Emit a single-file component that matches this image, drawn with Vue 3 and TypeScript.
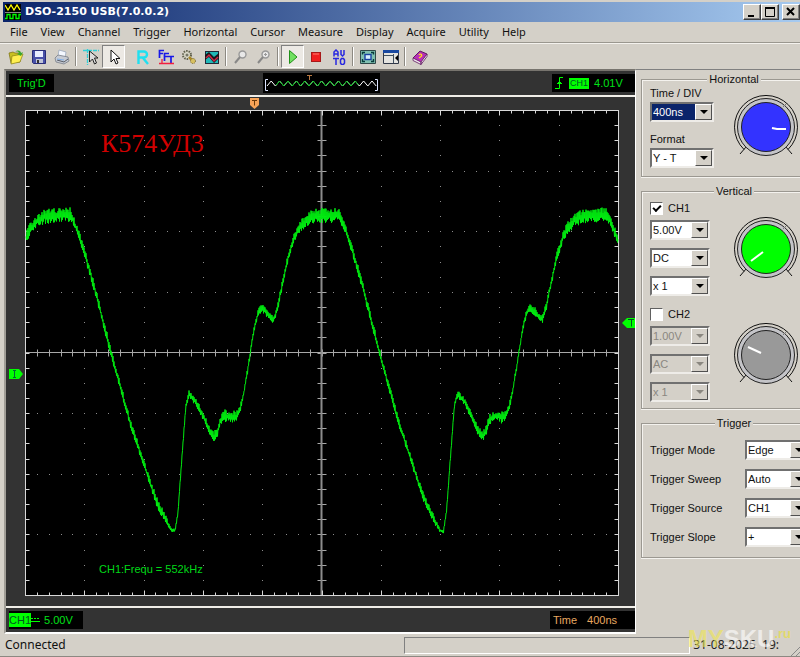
<script setup lang="ts">
import { reactive } from 'vue'

const menus = ['File', 'View', 'Channel', 'Trigger', 'Horizontal', 'Cursor', 'Measure', 'Display', 'Acquire', 'Utility', 'Help']

const settings = reactive({ time: '400ns', format: 'Y - T' })

const channels = reactive([
  { name: 'CH1', on: true, color: '#00ff00', hand: 'M-3 3L-15 12', fields: ['5.00V', 'DC', 'x 1'] },
  { name: 'CH2', on: false, color: '#999999', hand: 'M-18 -8L-5 -2', fields: ['1.00V', 'AC', 'x 1'] },
])
const fieldNames = ['Volts per division', 'Coupling', 'Probe']

const triggers = reactive([
  { label: 'Trigger Mode', value: 'Edge' },
  { label: 'Trigger Sweep', value: 'Auto' },
  { label: 'Trigger Source', value: 'CH1' },
  { label: 'Trigger Slope', value: '+' },
])

/* Graticule: 10 x 8 divisions */
const left = 25.5
const right = 618.5
const top = 110.5
const bottom = 595.5
const midX = 321.5
const midY = 352.5
const stepX = (right - left) / 50
const stepY = (bottom - top) / 32

let edgeTicks = ''
let axisTicks = ''
let dots = ''
for (let i = 1; i < 50; i++) {
  const x = Math.round(left + i * stepX - 0.5) + 0.5
  const len = i % 5 === 0 ? 5 : 3
  edgeTicks += `M${x} ${top}v${len}M${x} ${bottom}v${-len}`
  axisTicks += `M${x} ${midY - 3}v7`
  for (let r = 1; r < 8; r++) {
    if (r !== 4) dots += `M${x - 0.5} ${Math.round(top + r * stepY * 4 - 0.5) + 0.5}h1`
  }
}
for (let i = 1; i < 32; i++) {
  const y = Math.round(top + i * stepY - 0.5) + 0.5
  edgeTicks += `M${left} ${y}h4M${right} ${y}h-4`
  axisTicks += `M${midX - 4} ${y}h9`
  for (let c = 1; c < 10; c++) {
    if (c !== 5) dots += `M${Math.round(left + c * stepX * 5 - 0.5)} ${y}h1`
  }
}

/* One period of the signal; third value is the noise height */
const period = 268.5
const shape: number[][] = [
  [25, 240, 5], [30, 229, 6], [38, 220, 6], [46, 216, 7], [70, 215, 7], [73, 220, 5], [78, 233, 5],
  [85, 254, 5], [95, 290, 5], [105, 329, 5], [111, 353, 4], [121, 389, 4], [130, 422, 4], [140, 452, 4],
  [150, 483, 4], [158, 505, 5], [166, 520, 4], [171, 530, 2], [175, 531, 2], [178, 512, 2], [181, 470, 2],
  [184, 430, 2], [186, 405, 2], [189, 394, 4], [196, 402, 4], [204, 418, 4], [209, 430, 4], [214, 436, 5],
  [217, 433, 5], [221, 420, 5], [225, 416, 6], [236, 417, 6], [240, 410, 4], [244, 392, 3], [249, 362, 3],
  [252, 342, 3], [255, 325, 3], [258, 313, 4], [262, 308, 5], [266, 311, 5], [270, 317, 4], [274, 319, 4],
  [278, 306, 4], [283, 281, 4], [288, 258, 5], [293.5, 240, 5],
]

function sample(x: number): number[] {
  const px = ((x - 25) % period) + 25
  for (let i = 1; i < shape.length; i++) {
    const a = shape[i - 1]
    const b = shape[i]
    if (px <= b[0]) {
      const k = (px - a[0]) / (b[0] - a[0])
      return [a[1] + (b[1] - a[1]) * k, a[2] + (b[2] - a[2]) * k]
    }
  }
  return [240, 5]
}

let seed = 41
function noise(): number {
  seed = (seed * 16807) % 2147483647
  return seed / 2147483647
}

let trace = ''
for (let x = 26; x <= 618; x += 0.5) {
  const [y, amp] = sample(x)
  const side = Math.round(x * 2) % 2 ? 1 : -1
  const height = amp * (0.25 + 0.85 * noise())
  trace += `${trace ? 'L' : 'M'}${x} ${(y + side * height).toFixed(1)}`
}

let preview = 'M267 87'
for (let i = 0; i < 26; i++) preview += `l4.2 ${i % 2 ? 5 : -5}`
</script>

<template>
  <div class="window">
    <header class="title">
      <svg class="app-icon" width="16" height="16" viewBox="0 0 16 16">
        <rect width="16" height="16" fill="#000" />
        <path d="M0 1l3 5 3-5 3 5 3-5 3 5" fill="none" stroke="#ff0" stroke-width="1.3" />
        <path d="M0 8.500h16" stroke="#888" />
        <path d="M0 14.500h2v-4h3v4h3v-4h3v4h3v-4h2" fill="none" stroke="#0f0" stroke-width="1.3" />
      </svg>
      <h1>DSO-2150 USB(7.0.0.2)</h1>
      <button class="win" aria-label="Minimize"><svg width="12" height="12"><path d="M2 10h6" stroke="#000" stroke-width="2" /></svg></button>
      <button class="win" aria-label="Maximize"><svg width="12" height="12"><path d="M1.500 2v8.500h9V2M1 2h10" fill="none" stroke="#000" /><path d="M1 2h10" stroke="#000" stroke-width="2" /></svg></button>
      <button class="win close" aria-label="Close"><svg width="12" height="12"><path d="M2 2l7 7M9 2l-7 7" stroke="#000" stroke-width="2" /></svg></button>
    </header>

    <nav class="menu">
      <button v-for="m in menus" :key="m">{{ m }}</button>
    </nav>

    <div class="toolbar">
      <button aria-label="Open"><svg viewBox="0 0 16 16"><path d="M1 4l4-1 2 1h5v9l-9 1z" fill="#c8c020" stroke="#776d10" stroke-width=".7" /><path d="M4 7l11-2-3 8-9 2z" fill="#ffef50" stroke="#8a8010" stroke-width=".7" /><path d="M7 3c3-3 6-1 6 1l2-1-2 4-4-2 2-1c0-1-2-2-4-1z" fill="#3ba52c" /></svg></button>
      <button aria-label="Save"><svg viewBox="0 0 16 16"><path d="M1.500 1.500h13v13h-12l-1-1z" fill="#4850a8" stroke="#282c78" /><path d="M4 2h8v6H4z" fill="#e8ecff" /><path d="M5 10h7v4H5z" fill="#c0c4d8" /><path d="M6 11h2v3H6z" fill="#333" /></svg></button>
      <button aria-label="Print"><svg viewBox="0 0 16 16"><path d="M4 7l1-6 7 2-1 6z" fill="#f4f8ff" stroke="#90a0b8" stroke-width=".7" /><path d="M1 9l3-3 10 2 1 4-5 3-8-2z" fill="#c8ccd4" stroke="#777d88" stroke-width=".8" /><path d="M3 11l7 2 4-3" fill="none" stroke="#565c66" /><path d="M3 10l7 1" stroke="#80b0e8" /></svg></button>
      <i></i>
      <button aria-label="Cursor measure"><svg viewBox="0 0 16 16"><path d="M0 1.500h16M4.500 0v16" stroke="#30d0d8" stroke-width="1.300" stroke-dasharray="4 1" /><path d="M6.500 2v11l3-3 2 5 2-1-2-5h3.500z" fill="#ddd" stroke="#222" /></svg></button>
      <button class="down" aria-label="Pointer"><svg viewBox="0 0 16 16"><path d="M5 1v12l3-3 2 5 2-1-2-4.500h4z" fill="#fff" stroke="#111" /></svg></button>
      <i class="blank"></i>
      <button aria-label="Reference"><svg viewBox="0 0 16 16"><path d="M3.500 15V2.500H9a3 3 0 010 6H4M8 9l5 6" fill="none" stroke="#20e0f0" stroke-width="2.400" /></svg></button>
      <button aria-label="FFT"><svg viewBox="0 0 16 16"><path d="M1.500 9V1.500H6M2 4.500h3M6.500 12V4.500H11M7 7.500h3M10 7.500h6M13 8v6" fill="none" stroke="#1818e8" stroke-width="1.700" /><path d="M1 14.500h3V10M4 14.500h12" fill="none" stroke="#f02040" stroke-width="1.300" /></svg></button>
      <button aria-label="Settings"><svg viewBox="0 0 16 16"><circle cx="6" cy="6" r="4" fill="#d8d8c8" stroke="#60604c" stroke-width="2" stroke-dasharray="1.500 1" /><circle cx="6" cy="6" r="1.500" fill="#776" /><path d="M8 8l5 5" stroke="#a88828" stroke-width="2.500" /><circle cx="12" cy="12" r="2.500" fill="#d8c060" stroke="#706030" stroke-dasharray="1 1" /></svg></button>
      <button aria-label="Waveform"><svg viewBox="0 0 16 16"><path d="M1 2h14v13H1z" fill="#202838" /><path d="M2 3h12v11H2z" fill="#20b8b8" /><path d="M1 6l4-3 5 5 5-4v5l-5 5-5-6-4 3z" fill="#18181c" /><path d="M2 9l3-3 5 6 4-4" fill="none" stroke="#d02848" stroke-width="1.500" /></svg></button>
      <i></i>
      <button aria-label="Zoom in"><svg viewBox="0 0 16 16"><circle cx="9.500" cy="5.500" r="3.500" fill="#e8e8e8" stroke="#999" stroke-width="1.400" /><path d="M7 8l-5 6" stroke="#888" stroke-width="2" /></svg></button>
      <button aria-label="Zoom out"><svg viewBox="0 0 16 16"><circle cx="9.500" cy="5.500" r="3.500" fill="#e8e8e8" stroke="#999" stroke-width="1.400" /><path d="M7 8l-5 6" stroke="#888" stroke-width="2" /><path d="M8 5.500h3M9.500 4v3" stroke="#999" /></svg></button>
      <i></i>
      <button class="down" aria-label="Run"><svg viewBox="0 0 16 16"><path d="M4.500 1.500v13L12 8z" fill="#70e060" stroke="#209018" /></svg></button>
      <button aria-label="Stop"><svg viewBox="0 0 16 16"><rect x="3.500" y="3.500" width="9" height="9" fill="#f02020" stroke="#a81818" /><path d="M5 5h6" stroke="#ff8070" /></svg></button>
      <button aria-label="Auto set"><svg viewBox="0 0 16 16"><path d="M3 7.500V3l2-2 2 2v4.500M3 5h4M10 1v4.500l1.500 1.500 1.500-1.500V1M2 9.500h6M5 9.500V16M10.500 9.500h2l1 1.500v3l-1 1.500h-2l-1-1.500v-3z" fill="none" stroke="#2828e0" stroke-width="1.500" /></svg></button>
      <i></i>
      <button aria-label="Full screen"><svg viewBox="0 0 16 16"><path d="M.5 1.500h15v13H.5z" fill="#80c0b0" stroke="#304848" /><path d="M2.500 5.500v-2H5M11 3.500h2.500v2M13.500 10v2.500H11M5 12.500H2.500V10" fill="none" stroke="#063c3c" stroke-width="1.400" /><rect x="5" y="5.500" width="6" height="5" fill="#d8f0ff" stroke="#1840a0" stroke-width="1.400" /></svg></button>
      <button aria-label="Side panel"><svg viewBox="0 0 16 16"><path d="M.5 1.500h15v13H.5z" fill="#e4e4e0" stroke="#303848" /><path d="M0 1h16v3H0z" fill="#1848a0" /><path d="M10.500 5v9M1 6.500h9" stroke="#405060" /><path d="M15 6v6l-3-3z" fill="#000" /></svg></button>
      <i></i>
      <button aria-label="Help"><svg viewBox="0 0 16 16"><path d="M1 9l7-7 7 3-6 9z" fill="#b830b8" stroke="#601860" /><path d="M1 9l8 4v2.500L1 11.500zM9 13l6-8v2.500L9 15.500z" fill="#f0e8f0" stroke="#601860" stroke-width=".8" /><path d="M7 6c1-2 4 0 2 1.500L7 9" fill="none" stroke="#ffd820" stroke-width="1.400" /></svg></button>
    </div>

    <main class="body">
      <section class="scope">
        <div class="strip">
          <output class="box">Trig'D</output>
          <svg class="preview" width="117" height="20" viewBox="263 74 117 20">
            <rect x="263" y="74" width="117" height="20" fill="#000" />
            <path :d="preview" fill="none" stroke="#fff" />
            <path :d="preview" fill="none" stroke="#00c818" stroke-dasharray="0 14 128 200" />
            <path d="M268 80.500h-2.500v11h2.500M375 80.500h2.500v11h-2.500" fill="none" stroke="#dce4ff" />
            <path d="M307 76.500h5M309.500 77v4" stroke="#b87840" />
          </svg>
          <output class="box level">
            <svg width="9" height="14" viewBox="0 0 9 14"><path d="M0 12.500h4.500v-11H8M2 7.500h5M3 6.500h3M4 5.500h1" fill="none" stroke="#0f0" /></svg>
            <b>CH1</b><span>4.01V</span>
          </output>
        </div>

        <svg class="screen" viewBox="6 97 629 509" role="img" aria-label="Channel 1 waveform">
          <rect x="25" y="110" width="594" height="486" fill="#000" />
          <path :d="dots" class="dots" />
          <path :d="axisTicks" class="axis" />
          <path :d="`M${left} ${midY}H${right}`" class="axis" />
          <path :d="`M${midX} ${top}V${bottom}`" class="axis vertical" />
          <path :d="edgeTicks" class="frame" />
          <rect :x="left" :y="top" :width="right - left" :height="bottom - top" class="frame" />
          <path :d="trace" class="trace" />
          <text x="101" y="152" class="chip">К574УД3</text>
          <text x="99" y="573" class="measure">CH1:Frequ = 552kHz</text>
          <path d="M250 98h9v7l-4.500 4-4.500-4z" fill="#f8a458" />
          <path d="M252 100.500h5M254.500 100.500v5" stroke="#6a3808" />
          <path d="M9 369h10l4 5-4 5H9z" fill="#0f0" />
          <path d="M13 370.500h3M14.500 370.500v7M13 377.500h3" stroke="#063" />
          <path d="M622 323l5-5h8v10h-8z" fill="#0f0" />
          <path d="M628 319.500h6M631.500 319.500v7" stroke="#052" />
        </svg>

        <div class="strip foot">
          <output class="box channel"><b>CH1</b><svg width="9" height="6"><path d="M0 4.500h9" stroke="#0f0" /><path d="M0 1.500h9" stroke="#0f0" stroke-dasharray="2 1" /></svg><span>5.00V</span></output>
          <output class="box base"><span>Time</span><span>400ns</span></output>
        </div>
      </section>

      <aside class="side">
        <fieldset>
          <legend>Horizontal</legend>
          <div class="group">
            <div class="stack">
              <label for="time">Time / DIV</label>
              <div class="combo wide">
                <select id="time" v-model="settings.time" class="picked"><option>400ns</option><option>1us</option></select>
                <span class="arrow"></span>
              </div>
              <label for="format" class="next">Format</label>
              <div class="combo wide">
                <select id="format" v-model="settings.format"><option>Y - T</option><option>X - Y</option></select>
                <span class="arrow"></span>
              </div>
            </div>
            <svg class="knob" viewBox="-33 -33 66 66">
              <path d="M-20 20l-6 7M20 20l6 7M-22 22.500a31.500 31.500 0 1 1 44 0" class="line" />
              <circle r="28.500" fill="#c4c4c8" class="ring" />
              <path d="M17 -20l3 -3" stroke="#777" />
              <circle r="24.500" fill="#3333ff" class="ring" />
              <path d="M6 1l5 1h9" class="hand" />
            </svg>
          </div>
        </fieldset>

        <fieldset>
          <legend>Vertical</legend>
          <div class="channels">
            <div v-for="ch in channels" :key="ch.name" class="group">
              <div class="stack gaps">
                <label class="check"><input v-model="ch.on" type="checkbox" />{{ ch.name }}</label>
                <div v-for="(f, i) in ch.fields" :key="i" class="combo" :class="{ off: !ch.on }">
                  <select :aria-label="ch.name + ' ' + fieldNames[i]" :disabled="!ch.on"><option>{{ f }}</option></select>
                  <span class="arrow"></span>
                </div>
              </div>
              <svg class="knob" viewBox="-33 -33 66 66">
                <path d="M-20 20l-6 7M20 20l6 7M-22 22.500a31.500 31.500 0 1 1 44 0" class="line" />
                <circle r="28.500" fill="#c4c4c8" class="ring" />
                <path d="M17 -20l3 -3" stroke="#777" />
                <circle r="24.500" :fill="ch.color" class="ring" />
                <path :d="ch.hand" class="hand" />
              </svg>
            </div>
          </div>
        </fieldset>

        <fieldset>
          <legend>Trigger</legend>
          <div class="triggers">
            <template v-for="(t, i) in triggers" :key="t.label">
              <label :for="'trigger' + i">{{ t.label }}</label>
              <div class="combo wide">
                <select :id="'trigger' + i" v-model="t.value"><option>{{ t.value }}</option></select>
                <span class="arrow"></span>
              </div>
            </template>
          </div>
        </fieldset>
      </aside>
    </main>

    <footer class="status">
      <span class="state">Connected</span>
      <span class="pane"></span>
      <time class="clock">31-08-2025&nbsp; 19:</time>
      <svg class="grip" width="9" height="12"><path d="M0 12L12 0M5 12l7-7" stroke="#888" /></svg>
      <span class="mark"><em>MY</em>SKU<sup>.ru</sup></span>
    </footer>
  </div>
</template>

<style>
body {
  background: #d4d0c8;
}
</style>

<style scoped>
.window {
  display: flex;
  flex-direction: column;
  min-height: 100vh;
  overflow: hidden;
  background: #d4d0c8;
  color: #111;
  font-family: "Liberation Sans", Arial, sans-serif;
  font-size: 11px;
}
button {
  font: inherit;
  color: inherit;
  padding: 0;
  border: 0;
  background: none;
}
.title {
  display: flex;
  align-items: center;
  height: 20px;
  margin: 2px 0 0 3px;
  padding-left: 2px;
  overflow: hidden;
  background: linear-gradient(90deg, #0a246a, #a6caf0);
}
.title h1 {
  flex: 1;
  margin: 0 0 0 4px;
  color: #fff;
  font: bold 11px/20px "DejaVu Sans", sans-serif;
}
.win {
  display: grid;
  place-items: center;
  box-sizing: border-box;
  width: 18px;
  height: 16px;
  background: #d4d0c8;
  border: 1px solid;
  border-color: #fff #404040 #404040 #fff;
  box-shadow: inset -1px -1px #808080;
}
.win svg {
  display: block;
}
.close {
  margin-left: 3px;
}
.menu {
  display: flex;
  gap: 13px;
  height: 20px;
  padding: 0 10px;
  border-bottom: 1px solid #9a978f;
  font: 11px/20px "Noto Sans", sans-serif;
}
.toolbar {
  display: flex;
  align-items: center;
  height: 25px;
  padding-left: 4px;
  border-top: 1px solid #f4f2ee;
}
.toolbar button {
  display: grid;
  place-items: center;
  box-sizing: border-box;
  width: 23px;
  height: 23px;
  border: 1px solid transparent;
}
.toolbar svg {
  width: 16px;
  height: 16px;
}
.toolbar .down {
  background: #ece9e4;
  border-color: #808080 #fff #fff #808080;
}
.toolbar i {
  width: 1px;
  height: 19px;
  margin: 0 2px;
  background: #8c8982;
  border-right: 1px solid #fff;
}
.toolbar .blank {
  visibility: hidden;
}
.body {
  display: flex;
  flex: 1;
  align-items: stretch;
}
.scope {
  display: flex;
  flex: 1;
  flex-direction: column;
  min-width: 0;
  margin-left: 4px;
  background: #333;
  border: 2px solid;
  border-color: #77746e #fff #fff #a09d96;
  border-right-width: 1px;
}
.strip {
  display: flex;
  justify-content: space-between;
  align-items: center;
  height: 24px;
  padding-left: 3px;
  border-bottom: 2px solid #f0eee8;
}
.screen {
  display: block;
  width: 100%;
  flex: 1;
}
.foot {
  height: 24px;
  border-top: 2px solid #f0eee8;
  border-bottom: 0;
}
.box {
  display: flex;
  align-items: center;
  box-sizing: border-box;
  height: 18px;
  background: #000;
  color: #00e018;
}
.strip > .box:first-child {
  padding: 0 8px;
}
.preview {
  margin-left: 38px;
}
.box b {
  font-weight: normal;
  background: #0f0;
  color: #052;
}
.level {
  width: 83px;
  gap: 5px;
  padding-left: 3px;
}
.level b {
  font-size: 9px;
  line-height: 11px;
  padding: 0 1px;
}
.strip > .channel:first-child {
  width: 74px;
  padding: 0;
}
.channel b {
  line-height: 14px;
}
.channel span {
  margin-left: 4px;
}
.base {
  width: 85px;
  gap: 10px;
  padding-left: 3px;
  color: #e8a860;
}
.dots {
  stroke: #8c8c8c;
  fill: none;
}
.axis {
  stroke: #a8a8a8;
  fill: none;
}
.vertical {
  stroke: #8c8c8c;
  stroke-width: 2px;
}
.frame {
  stroke: #d8d8d8;
  fill: none;
}
.trace {
  stroke: #00ec10;
  fill: none;
  stroke-linejoin: round;
}
.chip {
  fill: #d00000;
  font: 26px "Liberation Serif", serif;
}
.measure {
  fill: #00d818;
  font: 11px "Liberation Sans", sans-serif;
}
.side {
  flex: none;
  display: flex;
  flex-direction: column;
  gap: 7px;
  box-sizing: border-box;
  width: 164px;
  padding: 2px 0 0 5px;
  border-top: 1px solid #808080;
  overflow: hidden;
}
fieldset {
  flex: none;
  box-sizing: border-box;
  width: 186px;
  margin: 0;
  padding: 0 8px;
  border: 1px solid #9b9891;
  box-shadow: inset 1px 1px #f4f2ee, 0 1px #f4f2ee;
}
legend {
  margin: 0 auto;
  padding: 0 2px;
  line-height: 14px;
  background: #d4d0c8;
}
.group {
  display: flex;
  align-items: center;
}
fieldset > .group {
  padding-bottom: 8px;
}
.stack {
  display: flex;
  flex-direction: column;
  gap: 2px;
  width: 64px;
}
.stack label {
  line-height: 14px;
}
.stack .next {
  margin-top: 8px;
}
.stack.gaps {
  gap: 8px;
}
.check {
  display: flex;
  align-items: center;
  gap: 5px;
  height: 14px;
  margin-bottom: -3px;
}
.check input {
  appearance: none;
  display: grid;
  place-items: center;
  box-sizing: border-box;
  width: 13px;
  height: 13px;
  margin: 0;
  background: #fff;
  border: 1px solid;
  border-color: #606060 #fff #fff #606060;
}
.check input:checked::before {
  content: "";
  width: 6px;
  height: 3px;
  margin-bottom: 2px;
  border: solid #000;
  border-width: 0 0 2px 2px;
  transform: rotate(-45deg);
}
.knob {
  flex: none;
  width: 66px;
  height: 66px;
  margin-left: 19px;
}
.line {
  fill: none;
  stroke: #111;
}
.ring {
  stroke: #222;
}
.hand {
  fill: none;
  stroke: #fff;
  stroke-width: 2px;
}
.channels {
  display: grid;
  gap: 11px;
  padding: 3px 0 6px;
}
.triggers {
  display: grid;
  grid-template-columns: 95px 64px;
  row-gap: 9px;
  align-items: center;
  padding: 10px 0;
}
.combo {
  display: grid;
  grid-template-columns: 1fr 17px;
  box-sizing: border-box;
  width: 60px;
  height: 20px;
  background: #fff;
  border: 2px solid;
  border-color: #707070 #eeece8 #eeece8 #707070;
}
.combo.wide {
  width: 64px;
}
.combo select {
  appearance: none;
  grid-area: 1 / 1 / 2 / 3;
  min-width: 0;
  margin: 0;
  padding: 0 17px 0 1px;
  border: 0;
  border-radius: 0;
  outline: 0;
  background: transparent;
  color: #111;
  font: inherit;
}
.combo .picked {
  background: #0a246a;
  color: #fff;
}
.arrow {
  grid-area: 1 / 2 / 2 / 3;
  display: grid;
  place-items: center;
  background: #d4d0c8;
  border: 1px solid;
  border-color: #fff #505050 #505050 #fff;
  pointer-events: none;
}
.arrow::before {
  content: "";
  border: 4px solid transparent;
  border-top-color: #000;
  border-bottom: 0;
}
.combo.off {
  background: #d4d0c8;
}
.off select {
  color: #8a8780;
  opacity: 1;
}
.off .arrow::before {
  border-top-color: #8a8780;
}
.status {
  position: relative;
  display: flex;
  align-items: center;
  height: 22px;
  padding-left: 5px;
  border-bottom: 1px solid #8c8982;
  font: 12px/20px "Noto Sans", sans-serif;
}
.state {
  flex: 1;
}
.pane {
  box-sizing: border-box;
  width: 36%;
  height: 17px;
  border: 1px solid;
  border-color: #808080 #fff #fff #808080;
}
.clock {
  margin-left: 3px;
  color: #222;
}
.grip {
  align-self: flex-end;
  margin-left: 12px;
}
.mark {
  position: absolute;
  right: 9px;
  bottom: 5px;
  color: rgba(255, 255, 255, 0.6);
  font: bold 24px/24px "Liberation Sans", sans-serif;
}
.mark em {
  font-style: normal;
  color: rgba(240, 230, 80, 0.6);
}
.mark sup {
  font-size: 13px;
  line-height: 0;
  color: rgba(230, 220, 80, 0.8);
}
</style>
